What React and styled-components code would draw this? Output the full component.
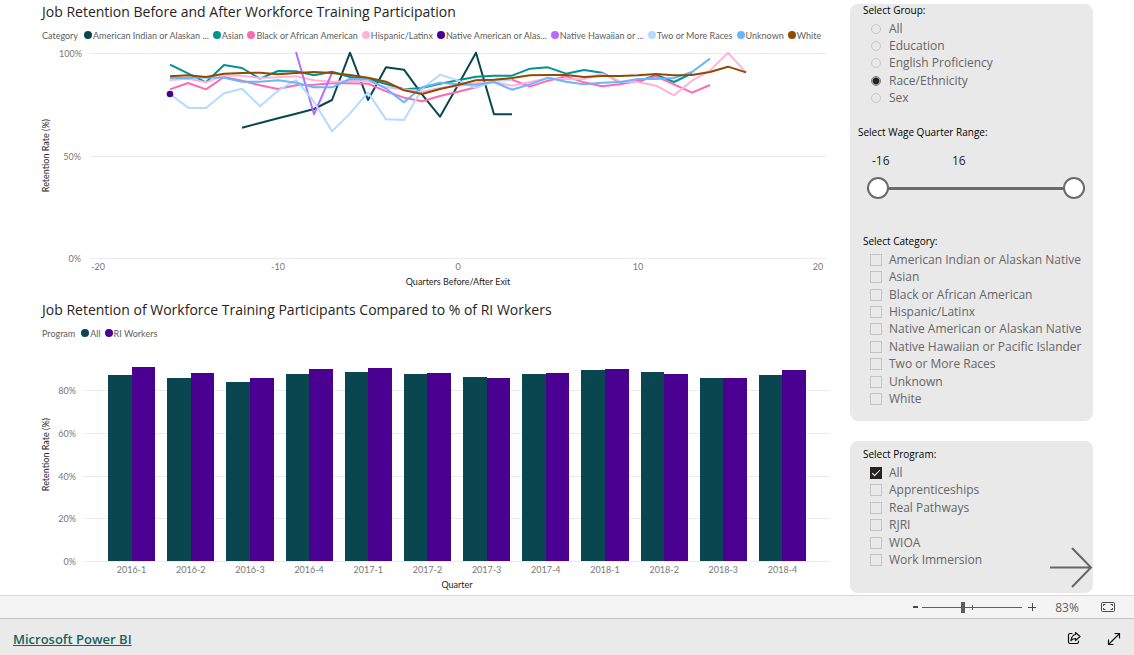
import React, { useState } from "react";
import styled, { createGlobalStyle } from "styled-components";

const GlobalStyle = createGlobalStyle`
  *, *::before, *::after { box-sizing: border-box; }
  body {
    margin: 0;
    background: #ffffff;
    font-family: "Open Sans", "Noto Sans", sans-serif;
  }
  button, input { font: inherit; }
`;

const CHART_FONT = `Lato, "Open Sans", sans-serif`;

const Page = styled.div`
  min-height: 100vh;
  display: flex;
  flex-direction: column;
`;

const Report = styled.main`
  flex: 1;
  display: grid;
  grid-template-columns: minmax(0, 1fr) 243px;
  column-gap: 20px;
  padding: 0 41px 2px 42px;
`;

const Charts = styled.div`
  display: flex;
  flex-direction: column;
  gap: 9px;
`;

const Chart = styled.section`
  display: flex;
  flex-direction: column;
`;

const ChartTitle = styled.h2`
  margin: 0;
  font-size: 14px;
  font-weight: 400;
  line-height: 24px;
  color: #252423;
  white-space: nowrap;
`;

const Legend = styled.ul`
  display: flex;
  align-items: center;
  gap: 4px;
  height: 22px;
  margin: 0;
  padding: 0;
  list-style: none;
  font-family: ${CHART_FONT};
  font-size: 9px;
  color: #605e5c;
  white-space: nowrap;
`;

const LegendTitle = styled.li`
  margin-right: 2px;
`;

const LegendItem = styled.li`
  display: flex;
  align-items: center;
  gap: 1px;

  &::before {
    content: "";
    width: 8px;
    height: 8px;
    border-radius: 50%;
    background: ${(p) => p.$color};
  }
`;

const ChartBody = styled.div`
  display: grid;
  grid-template-columns: 8px ${(p) => p.$axis}px minmax(0, 1fr);
  column-gap: ${(p) => p.$gap}px;
  margin-top: ${(p) => p.$top}px;
  padding-right: ${(p) => p.$right}px;
  font-family: ${CHART_FONT};
  font-size: 9px;
  color: #777777;
`;

const ValueTitle = styled.div`
  justify-self: center;
  align-self: center;
  writing-mode: vertical-rl;
  transform: rotate(180deg);
  line-height: 12px;
  color: #252423;
  white-space: nowrap;
`;

const ValueAxis = styled.div`
  align-self: end;
  height: ${(p) => p.$height};
  display: flex;
  flex-direction: column;
  justify-content: space-between;
  text-align: right;
  line-height: 1px;
`;

const Plot = styled.div`
  display: grid;
  height: ${(p) => p.$height}px;

  > * { grid-area: 1 / 1; }
`;

const GridLines = styled.div`
  align-self: end;
  height: ${(p) => p.$height};
  display: flex;
  flex-direction: column;
  justify-content: space-between;

  i { height: 1px; background: #ebebeb; }
`;

const Lines = styled.svg`
  width: 100%;
  height: 100%;
  overflow: visible;

  polyline {
    fill: none;
    stroke-width: 2px;
    stroke-linejoin: round;
    vector-effect: non-scaling-stroke;
  }
`;

const LineTicks = styled.div`
  grid-column: 3;
  display: flex;
  justify-content: space-between;
  margin: 0 -12px;
  line-height: 16px;

  span { width: 40px; text-align: center; }
`;

const AxisTitle = styled.div`
  grid-column: 3;
  text-align: center;
  line-height: 14px;
  color: #252423;
`;

const Bars = styled.div`
  display: flex;
  padding: 0 18px 1px;
`;

const BarGroup = styled.div`
  flex: 1;
  display: flex;
  align-items: flex-end;
  padding: 0 6px;
`;

const Bar = styled.div`
  flex: 1;
  background: ${(p) => p.$color};
`;

const BarTicks = styled.div`
  grid-column: 3;
  display: flex;
  padding: 0 18px;
  line-height: 16px;

  span { flex: 1; text-align: center; }
`;

const Filters = styled.aside`
  display: flex;
  flex-direction: column;
  gap: 20px;
  padding-top: 4px;
`;

const Panel = styled.div`
  position: relative;
  border-radius: 8px;
  background: #e9e9e9;
  padding: ${(p) => p.$pad};
`;

const Group = styled.fieldset`
  margin: 0;
  padding: 0;
  border: 0;
  min-width: 0;
`;

const Heading = styled.legend`
  padding: 0 0 0 ${(p) => p.$indent}px;
  font-size: 10px;
  line-height: 12px;
  color: #000000;
`;

const Options = styled.div`
  display: grid;
  grid-auto-rows: 1fr;
  height: ${(p) => p.$height}px;
  margin-top: 4px;
  padding-left: 20px;
`;

const Option = styled.label`
  display: flex;
  align-items: center;
  gap: 7px;
  font-size: 12px;
  line-height: 16px;
  color: #666666;
  white-space: nowrap;
`;

const Radio = styled.input`
  appearance: none;
  width: 10px;
  height: 10px;
  margin: 0 1px;
  border: 1px solid #c8c8c8;
  border-radius: 50%;

  &:checked {
    border-color: #777777;
    background: radial-gradient(circle, #252423 3px, transparent 4px);
  }
`;

const Check = styled.input`
  appearance: none;
  width: 12px;
  height: 12px;
  margin: 0;
  border: 1px solid #c4c4c4;
  display: grid;
  place-items: center;

  &:checked { background: #252423; border-color: #252423; }
  &:checked::after {
    content: "";
    width: 8px;
    height: 4px;
    border: solid #ffffff;
    border-width: 0 0 1px 1px;
    transform: translateY(-1px) rotate(-45deg);
  }
`;

const RangeGroup = styled.div`
  padding: 19px 0 36px;
`;

const RangeValues = styled.div`
  display: flex;
  gap: 40px;
  margin: 14px 0 9px 22px;
`;

const RangeValue = styled.input`
  width: 40px;
  height: 16px;
  padding: 0;
  border: 0;
  background: none;
  font-size: 12px;
  color: #252423;
`;

const RangeTrack = styled.div`
  display: grid;
  align-items: center;
  margin: 0 8px 0 17px;
  height: 22px;
  background: linear-gradient(#6b6b6b, #6b6b6b) center / 100% 3px no-repeat;

  > * { grid-area: 1 / 1; }
`;

const RangeInput = styled.input`
  appearance: none;
  width: 100%;
  height: 22px;
  margin: 0;
  background: none;
  pointer-events: none;

  &::-webkit-slider-thumb {
    appearance: none;
    width: 22px;
    height: 22px;
    border: 2px solid #6b6b6b;
    border-radius: 50%;
    background: #ffffff;
    pointer-events: auto;
  }
`;

const NextButton = styled.button`
  position: absolute;
  right: 0;
  bottom: 4px;
  padding: 0;
  border: 0;
  background: none;
  line-height: 0;
  cursor: pointer;
`;

const ZoomBar = styled.div`
  display: flex;
  align-items: center;
  justify-content: flex-end;
  height: 23px;
  padding-right: 16px;
  border-top: 1px solid #d9d9d9;
  background: #f4f4f4;
  font-size: 12px;
  color: #605e5c;
`;

const IconButton = styled.button`
  width: 20px;
  height: 20px;
  padding: 0;
  border: 0;
  background: none;
  line-height: 0;
  color: ${(p) => p.$color || "#4a4a4a"};
`;

const ZoomRange = styled.input`
  appearance: none;
  width: 100px;
  height: 12px;
  margin: 0;
  background:
    linear-gradient(#605e5c, #605e5c) center / 100% 1px no-repeat,
    linear-gradient(#605e5c, #605e5c) center / 1px 5px no-repeat;

  &::-webkit-slider-thumb {
    appearance: none;
    width: 4px;
    height: 11px;
    background: #605e5c;
  }
`;

const ZoomLevel = styled.output`
  width: 36px;
  margin: 0 13px 0 7px;
  text-align: center;
`;

const Footer = styled.footer`
  display: flex;
  align-items: center;
  justify-content: space-between;
  height: 37px;
  padding: 3px 10px 0 13px;
  border-top: 1px solid #c4c4c4;
  background: #eaeaea;
`;

const BrandLink = styled.a`
  font-size: 13px;
  font-weight: 600;
  line-height: 20px;
  color: #17645c;
`;

const FooterActions = styled.div`
  display: flex;
  gap: 20px;
`;

const SHADES = {
  teal: "#0a4650",
  green: "#009490",
  pink: "#ff69b4",
  rose: "#ffb3da",
  violet: "#4a0090",
  lilac: "#b66dff",
  ice: "#b5daff",
  sky: "#6bb4ff",
  brown: "#924900",
};

/* Each series starts at quarter `from`; values are distances below the 100% line. */
const SERIES = [
  { label: "American Indian or Alaskan ...", color: SHADES.teal, from: -12, points: [224, 210, 196, 182, 168, 141, -1, 141, 43, 50, 124, 191, 96, -1, 184, 184] },
  { label: "Asian", color: SHADES.green, from: -16, points: [35, 61, 88, 36, 45, 77, 54, 55, 67, 56, 72, 77, 93, 109, 105, 92, 82, 71, 68, 68, 47, 43, 62, 51, 59, 88, 87, 65, 87, 61] },
  { label: "Black or African American", color: SHADES.pink, from: -16, points: [109, 90, 109, 72, 83, 97, 108, 97, 95, 91, 91, 92, 115, 134, 145, 129, 116, 103, 81, 80, 101, 83, 70, 88, 100, 94, 83, 70, 94, 119, 96] },
  { label: "Hispanic/Latinx", color: SHADES.rose, from: -16, points: [81, 77, 88, 67, 68, 75, 73, 70, 82, 86, 84, 85, 103, 109, 116, 105, 99, 91, 87, 98, 87, 76, 79, 78, 62, 86, 87, 98, 127, 83, 53, -1, 59] },
  { label: "Native American or Alas...", color: SHADES.violet, from: -16, points: [123] },
  { label: "Native Hawaiian or ...", color: SHADES.lilac, from: -9, points: [-3, 184, 60] },
  { label: "Two or More Races", color: SHADES.ice, from: -16, points: [123, 164, 165, 121, 107, 160, 113, 81, 146, 235, 181, 118, 199, 201, 108, 65, 82, 105, 84, 81] },
  { label: "Unknown", color: SHADES.sky, from: -16, points: [75, 75, 73, 74, 86, 86, 82, 89, 103, 103, 78, 79, 107, 148, 103, 89, 94, 95, 87, 110, 94, 74, 86, 94, 89, 87, 78, 78, 75, 57, 17] },
  { label: "White", color: SHADES.brown, from: -16, points: [70, 67, 72, 62, 60, 59, 64, 60, 57, 60, 66, 74, 86, 112, 123, 108, 96, 82, 80, 75, 67, 66, 66, 72, 69, 69, 67, 63, 67, 66, 57, 41, 58] },
];

const quarterX = (q) => 1104 + q * 54;

const LINES = SERIES.filter((s) => s.points.length > 1);
const DOTS = SERIES.filter((s) => s.points.length === 1);

const QUARTERS = [
  ["2016-1", 87, 90.8],
  ["2016-2", 85.6, 88],
  ["2016-3", 83.6, 85.5],
  ["2016-4", 87.6, 89.5],
  ["2017-1", 88.4, 90.3],
  ["2017-2", 87.6, 88],
  ["2017-3", 86.1, 85.5],
  ["2017-4", 87.3, 87.8],
  ["2018-1", 89.2, 89.8],
  ["2018-2", 88.3, 87.3],
  ["2018-3", 85.6, 85.5],
  ["2018-4", 86.7, 89.2],
];

const GROUPS = ["All", "Education", "English Proficiency", "Race/Ethnicity", "Sex"];
const CATEGORIES = [
  "American Indian or Alaskan Native",
  "Asian",
  "Black or African American",
  "Hispanic/Latinx",
  "Native American or Alaskan Native",
  "Native Hawaiian or Pacific Islander",
  "Two or More Races",
  "Unknown",
  "White",
];
const PROGRAMS = ["All", "Apprenticeships", "Real Pathways", "RJRI", "WIOA", "Work Immersion"];

function LineChart() {
  return (
    <Chart>
      <ChartTitle>Job Retention Before and After Workforce Training Participation</ChartTitle>
      <Legend>
        <LegendTitle>Category</LegendTitle>
        {SERIES.map((s) => (
          <LegendItem key={s.label} $color={s.color}>{s.label}</LegendItem>
        ))}
      </Legend>
      <ChartBody $axis={22} $gap={9} $top={7} $right={4}>
        <ValueTitle>Retention Rate (%)</ValueTitle>
        <ValueAxis $height="100%">
          <span>100%</span>
          <span>50%</span>
          <span>0%</span>
        </ValueAxis>
        <Plot $height={206}>
          <GridLines $height="100%"><i /><i /><i /></GridLines>
          <Lines viewBox="0 0 2208 618" preserveAspectRatio="none" role="img" aria-label="Retention rate by quarter">
            {LINES.map((s) => (
              <polyline
                key={s.label}
                stroke={s.color}
                points={s.points.map((y, i) => `${quarterX(s.from + i)},${y}`).join(" ")}
              />
            ))}
            {DOTS.map((s) => (
              <circle key={s.label} cx={quarterX(s.from)} cy={s.points[0]} r="10" fill={s.color} />
            ))}
          </Lines>
        </Plot>
        <LineTicks>
          {[-20, -10, 0, 10, 20].map((t) => <span key={t}>{t}</span>)}
        </LineTicks>
        <AxisTitle>Quarters Before/After Exit</AxisTitle>
      </ChartBody>
    </Chart>
  );
}

function BarChart() {
  return (
    <Chart>
      <ChartTitle>Job Retention of Workforce Training Participants Compared to % of RI Workers</ChartTitle>
      <Legend>
        <LegendTitle>Program</LegendTitle>
        <LegendItem $color={SHADES.teal}>All</LegendItem>
        <LegendItem $color={SHADES.violet}>RI Workers</LegendItem>
      </Legend>
      <ChartBody $axis={18} $gap={8} $top={3} $right={0}>
        <ValueTitle>Retention Rate (%)</ValueTitle>
        <ValueAxis $height="80%">
          {[80, 60, 40, 20, 0].map((t) => <span key={t}>{t}%</span>)}
        </ValueAxis>
        <Plot $height={215}>
          <GridLines $height="80%"><i /><i /><i /><i /><i /></GridLines>
          <Bars>
            {QUARTERS.map(([q, all, ri]) => (
              <BarGroup key={q}>
                <Bar $color={SHADES.teal} style={{ height: `${all}%` }} />
                <Bar $color={SHADES.violet} style={{ height: `${ri}%` }} />
              </BarGroup>
            ))}
          </Bars>
        </Plot>
        <BarTicks>
          {QUARTERS.map(([q]) => <span key={q}>{q}</span>)}
        </BarTicks>
        <AxisTitle>Quarter</AxisTitle>
      </ChartBody>
    </Chart>
  );
}

function CheckList({ items, checked, height }) {
  return (
    <Options $height={height}>
      {items.map((item) => (
        <Option key={item}>
          <Check type="checkbox" defaultChecked={item === checked} />
          {item}
        </Option>
      ))}
    </Options>
  );
}

export default function App() {
  const [low, setLow] = useState(-16);
  const [high, setHigh] = useState(16);
  const [zoom, setZoom] = useState(83);

  return (
    <>
      <GlobalStyle />
      <Page>
        <Report>
          <Charts>
            <LineChart />
            <BarChart />
          </Charts>
          <Filters>
            <Panel $pad="0 0 13px">
              <Group>
                <Heading $indent={13}>Select Group:</Heading>
                <Options $height={87}>
                  {GROUPS.map((g) => (
                    <Option key={g}>
                      <Radio type="radio" name="group" defaultChecked={g === "Race/Ethnicity"} />
                      {g}
                    </Option>
                  ))}
                </Options>
              </Group>
              <RangeGroup role="group" aria-labelledby="range-heading">
                <Heading as="div" id="range-heading" $indent={8}>Select Wage Quarter Range:</Heading>
                <RangeValues>
                  <RangeValue aria-label="Lowest quarter" value={low} onChange={(e) => setLow(e.target.value)} />
                  <RangeValue aria-label="Highest quarter" value={high} onChange={(e) => setHigh(e.target.value)} />
                </RangeValues>
                <RangeTrack>
                  <RangeInput type="range" aria-label="From quarter" min="-16" max="16" value={low} onChange={(e) => setLow(e.target.value)} />
                  <RangeInput type="range" aria-label="To quarter" min="-16" max="16" value={high} onChange={(e) => setHigh(e.target.value)} />
                </RangeTrack>
              </RangeGroup>
              <Group>
                <Heading $indent={13}>Select Category:</Heading>
                <CheckList items={CATEGORIES} height={157} />
              </Group>
            </Panel>
            <Panel $pad="7px 0 24px">
              <Group>
                <Heading $indent={13}>Select Program:</Heading>
                <CheckList items={PROGRAMS} checked="All" height={105} />
              </Group>
              <NextButton aria-label="Next page">
                <svg width="43" height="42" viewBox="0 0 43 42" fill="none" stroke="#666666" strokeWidth="2">
                  <path d="M0 20.500H41M22 1L41 20.500L22 40" />
                </svg>
              </NextButton>
            </Panel>
          </Filters>
        </Report>
        <ZoomBar>
          <IconButton aria-label="Zoom out">
            <svg width="20" height="20" stroke="currentColor" strokeWidth="2"><path d="M11 10h5" /></svg>
          </IconButton>
          <ZoomRange type="range" aria-label="Zoom" min="10" max="190" value={zoom} onChange={(e) => setZoom(Number(e.target.value))} />
          <IconButton aria-label="Zoom in">
            <svg width="20" height="20" stroke="currentColor" strokeWidth="1"><path d="M6 10.500h8M10.500 6v8" /></svg>
          </IconButton>
          <ZoomLevel>{zoom}%</ZoomLevel>
          <IconButton aria-label="Fit to page">
            <svg width="20" height="20" fill="none" stroke="currentColor">
              <rect x="3.500" y="5.500" width="13" height="9" rx="1" />
              <path d="M5.500 9V7.500H7.500M12.500 7.500H14.500V9M14.500 11V12.500H12.500M7.500 12.500H5.500V11" />
            </svg>
          </IconButton>
        </ZoomBar>
        <Footer>
          <BrandLink href="#">Microsoft Power BI</BrandLink>
          <FooterActions>
            <IconButton aria-label="Share" $color="#111111">
              <svg width="20" height="20" fill="none" stroke="currentColor" strokeWidth="1.200" strokeLinejoin="round" strokeLinecap="round">
                <path d="M8 4.500H6A1.500 1.500 0 0 0 4.500 6V13A1.500 1.500 0 0 0 6 14.500H13A1.500 1.500 0 0 0 14.500 13V12" />
                <path d="M11.500 3.500L16 7.500L11.500 11.500V9.500C9.500 9.500 8.500 10 7 11.500C7.500 8 9 5.800 11.500 5.500Z" />
              </svg>
            </IconButton>
            <IconButton aria-label="Full screen" $color="#111111">
              <svg width="20" height="20" fill="none" stroke="currentColor" strokeWidth="1.200">
                <path d="M4.500 15.500L15.500 4.500M10.500 4.500H15.500V9.500M4.500 10.500V15.500H9.500" />
              </svg>
            </IconButton>
          </FooterActions>
        </Footer>
      </Page>
    </>
  );
}
